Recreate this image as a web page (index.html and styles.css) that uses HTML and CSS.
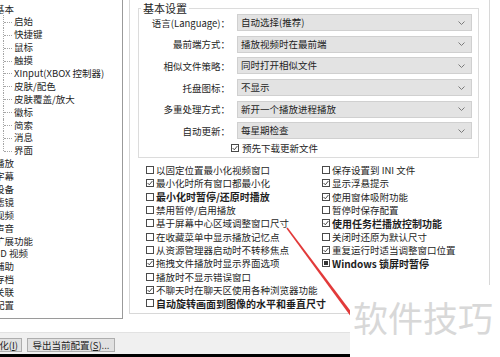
FILE: index.html
```html
<!DOCTYPE html>
<html lang="zh-CN">

<head>
    <meta charset="UTF-8">
    <meta name="viewport" content="width=device-width, initial-scale=1.0">
    <title>选项 - 常规</title>
    <link rel="stylesheet" href="styles.css">
</head>

<body>
    <div class="dialog">
        <div class="main">
            <div class="tree">
                <div class="node top">基本</div>
                <div class="children">
                    <div class="node child">启始</div>
                    <div class="node child">快捷键</div>
                    <div class="node child">鼠标</div>
                    <div class="node child">触摸</div>
                    <div class="node child">XInput(XBOX 控制器)</div>
                    <div class="node child">皮肤/配色</div>
                    <div class="node child">皮肤覆盖/放大</div>
                    <div class="node child">徽标</div>
                    <div class="node child">简索</div>
                    <div class="node child">消息</div>
                    <div class="node child">界面</div>
                </div>
                <div class="node top">播放</div>
                <div class="node top">字幕</div>
                <div class="node top">设备</div>
                <div class="node top">滤镜</div>
                <div class="node top">视频</div>
                <div class="node top">声音</div>
                <div class="node top">扩展功能</div>
                <div class="node top">3D 视频</div>
                <div class="node top">辅助</div>
                <div class="node top">存档</div>
                <div class="node top">关联</div>
                <div class="node top">配置</div>
            </div>

            <div class="page">
                <fieldset class="group">
                    <legend>基本设置</legend>
                    <div class="row">
                        <label>语言(Language)：</label>
                        <div class="select"><span>自动选择(推荐)</span><svg width="7" height="4" viewBox="0 0 7 4"><polyline points="0.5,0.5 3.5,3.5 6.5,0.5" /></svg></div>
                    </div>
                    <div class="row">
                        <label>最前端方式：</label>
                        <div class="select"><span>播放视频时在最前端</span><svg width="7" height="4" viewBox="0 0 7 4"><polyline points="0.5,0.5 3.5,3.5 6.5,0.5" /></svg></div>
                    </div>
                    <div class="row">
                        <label>相似文件策略：</label>
                        <div class="select"><span>同时打开相似文件</span><svg width="7" height="4" viewBox="0 0 7 4"><polyline points="0.5,0.5 3.5,3.5 6.5,0.5" /></svg></div>
                    </div>
                    <div class="row">
                        <label>托盘图标：</label>
                        <div class="select"><span>不显示</span><svg width="7" height="4" viewBox="0 0 7 4"><polyline points="0.5,0.5 3.5,3.5 6.5,0.5" /></svg></div>
                    </div>
                    <div class="row">
                        <label>多重处理方式：</label>
                        <div class="select"><span>新开一个播放进程播放</span><svg width="7" height="4" viewBox="0 0 7 4"><polyline points="0.5,0.5 3.5,3.5 6.5,0.5" /></svg></div>
                    </div>
                    <div class="row">
                        <label>自动更新：</label>
                        <div class="select"><span>每星期检查</span><svg width="7" height="4" viewBox="0 0 7 4"><polyline points="0.5,0.5 3.5,3.5 6.5,0.5" /></svg></div>
                    </div>
                    <div class="opt update"><span class="cb on"><svg width="6" height="6" viewBox="0 0 6 6"><polyline points="0.6,3 2.3,4.8 5.4,1" /></svg></span>预先下载更新文件</div>
                </fieldset>

                <div class="options">
                    <div class="col">
                        <div class="opt"><span class="cb"></span>以固定位置最小化视频窗口</div>
                        <div class="opt"><span class="cb on"><svg width="6" height="6" viewBox="0 0 6 6"><polyline points="0.6,3 2.3,4.8 5.4,1" /></svg></span>最小化时所有窗口都最小化</div>
                        <div class="opt bold"><span class="cb"></span>最小化时暂停/还原时播放</div>
                        <div class="opt"><span class="cb"></span>禁用暂停/启用播放</div>
                        <div class="opt"><span class="cb"></span>基于屏幕中心区域调整窗口尺寸</div>
                        <div class="opt"><span class="cb"></span>在收藏菜单中显示播放记忆点</div>
                        <div class="opt"><span class="cb"></span>从资源管理器启动时不转移焦点</div>
                        <div class="opt"><span class="cb on"><svg width="6" height="6" viewBox="0 0 6 6"><polyline points="0.6,3 2.3,4.8 5.4,1" /></svg></span>拖拽文件播放时显示界面选项</div>
                        <div class="opt"><span class="cb"></span>播放时不显示错误窗口</div>
                        <div class="opt"><span class="cb on"><svg width="6" height="6" viewBox="0 0 6 6"><polyline points="0.6,3 2.3,4.8 5.4,1" /></svg></span>不聊天时在聊天区使用各种浏览器功能</div>
                        <div class="opt bold"><span class="cb"></span>自动旋转画面到图像的水平和垂直尺寸</div>
                    </div>
                    <div class="col">
                        <div class="opt"><span class="cb"></span>保存设置到 INI 文件</div>
                        <div class="opt"><span class="cb on"><svg width="6" height="6" viewBox="0 0 6 6"><polyline points="0.6,3 2.3,4.8 5.4,1" /></svg></span>显示浮悬提示</div>
                        <div class="opt"><span class="cb on"><svg width="6" height="6" viewBox="0 0 6 6"><polyline points="0.6,3 2.3,4.8 5.4,1" /></svg></span>使用窗体吸附功能</div>
                        <div class="opt"><span class="cb"></span>暂停时保存配置</div>
                        <div class="opt bold"><span class="cb on"><svg width="6" height="6" viewBox="0 0 6 6"><polyline points="0.6,3 2.3,4.8 5.4,1" /></svg></span>使用任务栏播放控制功能</div>
                        <div class="opt"><span class="cb"></span>关闭时还原为默认尺寸</div>
                        <div class="opt"><span class="cb on"><svg width="6" height="6" viewBox="0 0 6 6"><polyline points="0.6,3 2.3,4.8 5.4,1" /></svg></span>重复运行时适当调整窗口位置</div>
                        <div class="opt bold"><span class="cb mixed"></span>Windows 锁屏时暂停</div>
                    </div>
                </div>
            </div>
        </div>

        <div class="buttons">
            <button class="btn cut">初始化(<u>I</u>)</button>
            <button class="btn">导出当前配置(<u>S</u>)...</button>
        </div>
        <div class="taskbar"></div>
    </div>

    <!-- annotation added on top of the screenshot -->
    <svg class="arrow" width="500" height="357" viewBox="0 0 500 357">
        <polygon points="286.4,228.4 287.6,227.6 366.4,331.9 363.6,334.1" />
    </svg>
    <div class="watermark">软件技巧</div>
</body>

</html>
```

FILE: styles.css
```css
body {
    margin: 0;
    width: 500px;
    height: 357px;
    overflow: hidden;
    position: relative;
    background-color: #fff;
    font-family: "Noto Sans CJK SC", "Noto Sans", sans-serif;
    font-size: 9.5px;
    color: #1e1e1e;
}

.dialog {
    display: flex;
    flex-direction: column;
    height: 357px;
}

.main {
    display: flex;
    align-items: flex-start;
    height: 332px;
    background-color: #fff;
}

/* left tree */
.tree {
    box-sizing: border-box;
    width: 123px;
    height: 319px;
    padding-top: 2.5px;
    border-right: 1px solid #9a9a9a;
    border-bottom: 1px solid #9a9a9a;
    overflow: hidden;
    flex-shrink: 0;
}

.node {
    height: 12.9px;
    line-height: 12.9px;
    white-space: nowrap;
}

.top {
    margin-left: -5px;
}

.child {
    position: relative;
    padding-left: 14px;
}

.child::before {
    content: "";
    position: absolute;
    left: 3px;
    top: 0;
    bottom: 0;
    border-left: 1px dotted #a5a5a5;
}

.child:last-child::before {
    bottom: 50%;
}

.child::after {
    content: "";
    position: absolute;
    left: 4px;
    top: 50%;
    width: 8px;
    border-top: 1px dotted #a5a5a5;
}

/* right page */
.page {
    box-sizing: border-box;
    width: 361px;
    height: 314px;
    margin-left: 6px;
    padding: 2px 10px 0 8px;
    border: 1px solid #d8d8d8;
    border-top: none;
    flex-shrink: 0;
}

.group {
    box-sizing: border-box;
    width: 341px;
    margin: 0;
    padding: 0 6px 2.5px 0;
    border: 1px solid #dcdcdc;
    min-width: 0;
}

.group legend {
    margin-left: 2px;
    padding: 0 2px;
    font-size: 11px;
    line-height: 12px;
}

.row {
    display: flex;
    align-items: center;
    gap: 7px;
    height: 17px;
    margin-bottom: 4.7px;
}

.row label {
    width: 91px;
    text-align: right;
    white-space: nowrap;
}

.select {
    box-sizing: border-box;
    display: flex;
    align-items: center;
    justify-content: space-between;
    width: 235px;
    height: 17px;
    padding: 0 6px 0 3px;
    background-color: #e3e3e3;
    border: 1px solid #d0d0d0;
    line-height: 15px;
}

.select svg polyline {
    fill: none;
    stroke: #7a7a7a;
    stroke-width: 1;
}

.opt {
    display: flex;
    align-items: center;
    gap: 2px;
    height: 13.35px;
    white-space: nowrap;
}

.opt.update {
    margin: -2.7px 0 0 92px;
    gap: 3px;
}

.bold {
    font-weight: bold;
    font-size: 10px;
}

.cb {
    box-sizing: border-box;
    display: flex;
    align-items: center;
    justify-content: center;
    width: 8px;
    height: 8px;
    border: 1px solid #4a4a4a;
    background-color: #fff;
    flex-shrink: 0;
}

.cb svg polyline {
    fill: none;
    stroke: #333;
    stroke-width: 0.9;
}

.cb.mixed {
    background-color: #333;
    box-shadow: inset 0 0 0 1px #fff;
}

.options {
    display: flex;
    margin-top: 5px;
    padding-left: 8px;
}

.options .col:first-child {
    width: 176px;
}

/* bottom bar */
.buttons {
    display: flex;
    gap: 5px;
    height: 22px;
    padding-top: 5px;
    box-sizing: border-box;
    background-color: #f0f0f0;
    border-top: 1px solid #e2e2e2;
}

.btn {
    box-sizing: border-box;
    height: 14px;
    padding: 0 3px;
    background-color: #e1e1e1;
    border: 1px solid #adadad;
    font-family: inherit;
    font-size: 9.5px;
    line-height: 12px;
    color: #1e1e1e;
    white-space: nowrap;
    overflow: hidden;
}

.btn.cut {
    width: 60px;
    margin-left: -38px;
    text-align: right;
}

.btn:last-child {
    width: 88px;
}

.taskbar {
    height: 3px;
    background-color: #000;
}

/* overlays */
.arrow {
    position: absolute;
    left: 0;
    top: 0;
    pointer-events: none;
}

.arrow polygon {
    fill: #e23a3a;
}

.watermark {
    position: absolute;
    left: 350px;
    top: 285px;
    width: 150px;
    height: 72px;
    box-sizing: border-box;
    padding: 14px 0 0 3px;
    background-color: #fff;
    font-size: 35px;
    line-height: 35px;
    color: #d8d8d8;
    white-space: nowrap;
}
```
